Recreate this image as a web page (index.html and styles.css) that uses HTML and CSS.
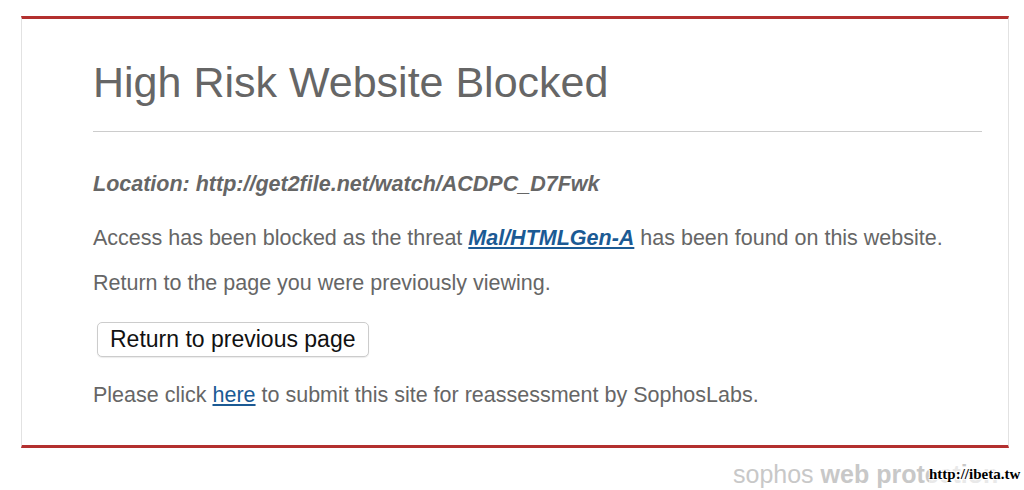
FILE: index.html
```html
<!DOCTYPE html>
<html>
<head>
<meta charset="utf-8">
<link rel="stylesheet" href="styles.css">
</head>
<body>
<div class="panel">
  <h1 class="title">High Risk Website Blocked</h1>
  <hr class="rule">
  <p class="location">Location: http://get2file.net/watch/ACDPC_D7Fwk</p>
  <p class="text access">Access has been blocked as the threat <a class="threat" href="#">Mal/HTMLGen-A</a> has been found on this website.</p>
  <p class="text">Return to the page you were previously viewing.</p>
  <button class="btn">Return to previous page</button>
  <p class="text last">Please click <a class="link" href="#">here</a> to submit this site for reassessment by SophosLabs.</p>
</div>
<div class="footer">sophos <b>web protection</b></div>
<div class="watermark">http://ibeta.tw</div>
</body>
</html>
```
FILE: styles.css
```css
html, body {
  margin: 0;
  padding: 0;
  background: #fff;
  font-family: "Liberation Sans", Arial, sans-serif;
}
body {
  width: 1024px;
  height: 490px;
  overflow: hidden;
  position: relative;
}
.panel {
  margin: 16px 0 0 21px;
  width: 988px;
  box-sizing: border-box;
  border-top: 3px solid #b3302f;
  border-bottom: 3px solid #b3302f;
  border-left: 1px solid #e2e2e2;
  border-right: 1px solid #e2e2e2;
  padding: 0 26px 37px 71px;
  color: #666;
}
.title {
  margin: 0;
  padding-top: 36px;
  font-size: 43px;
  font-weight: normal;
  line-height: 54px;
  color: #666;
}
.rule {
  margin: 22px 0 0 0;
  border: 0;
  border-top: 1px solid #ccc;
  height: 0;
}
.location {
  margin: 38px 0 0 0;
  font-size: 21.5px;
  line-height: 28px;
  font-weight: bold;
  font-style: italic;
}
.text {
  margin: 19px 0 0 0;
  font-size: 21.5px;
  line-height: 26px;
}
.text.access {
  margin-top: 27px;
}
.threat {
  color: #1b5a94;
  font-weight: bold;
  font-style: italic;
}
.link {
  color: #1b5a94;
}
.btn {
  display: block;
  margin: 26px 0 0 4px;
  height: 35px;
  padding: 0 12px;
  font-family: "Liberation Sans", Arial, sans-serif;
  font-size: 23px;
  color: #111;
  background: #fff;
  border: 1px solid #ccc;
  border-radius: 5px;
  box-shadow: 0 1px 1px rgba(0,0,0,0.08);
}
.text.last {
  margin-top: 25px;
}
.footer {
  margin: 12px 0 0 733px;
  font-size: 25px;
  color: #c8c8c8;
  white-space: nowrap;
}
.watermark {
  position: absolute;
  left: 929px;
  top: 466px;
  font-family: "Liberation Serif", serif;
  font-size: 15px;
  font-weight: bold;
  color: #000;
  background: rgba(255,255,255,0.6);
  text-shadow: 1px 1px 0 #fff, -1px -1px 0 #fff, 1px -1px 0 #fff, -1px 1px 0 #fff;
}
```
